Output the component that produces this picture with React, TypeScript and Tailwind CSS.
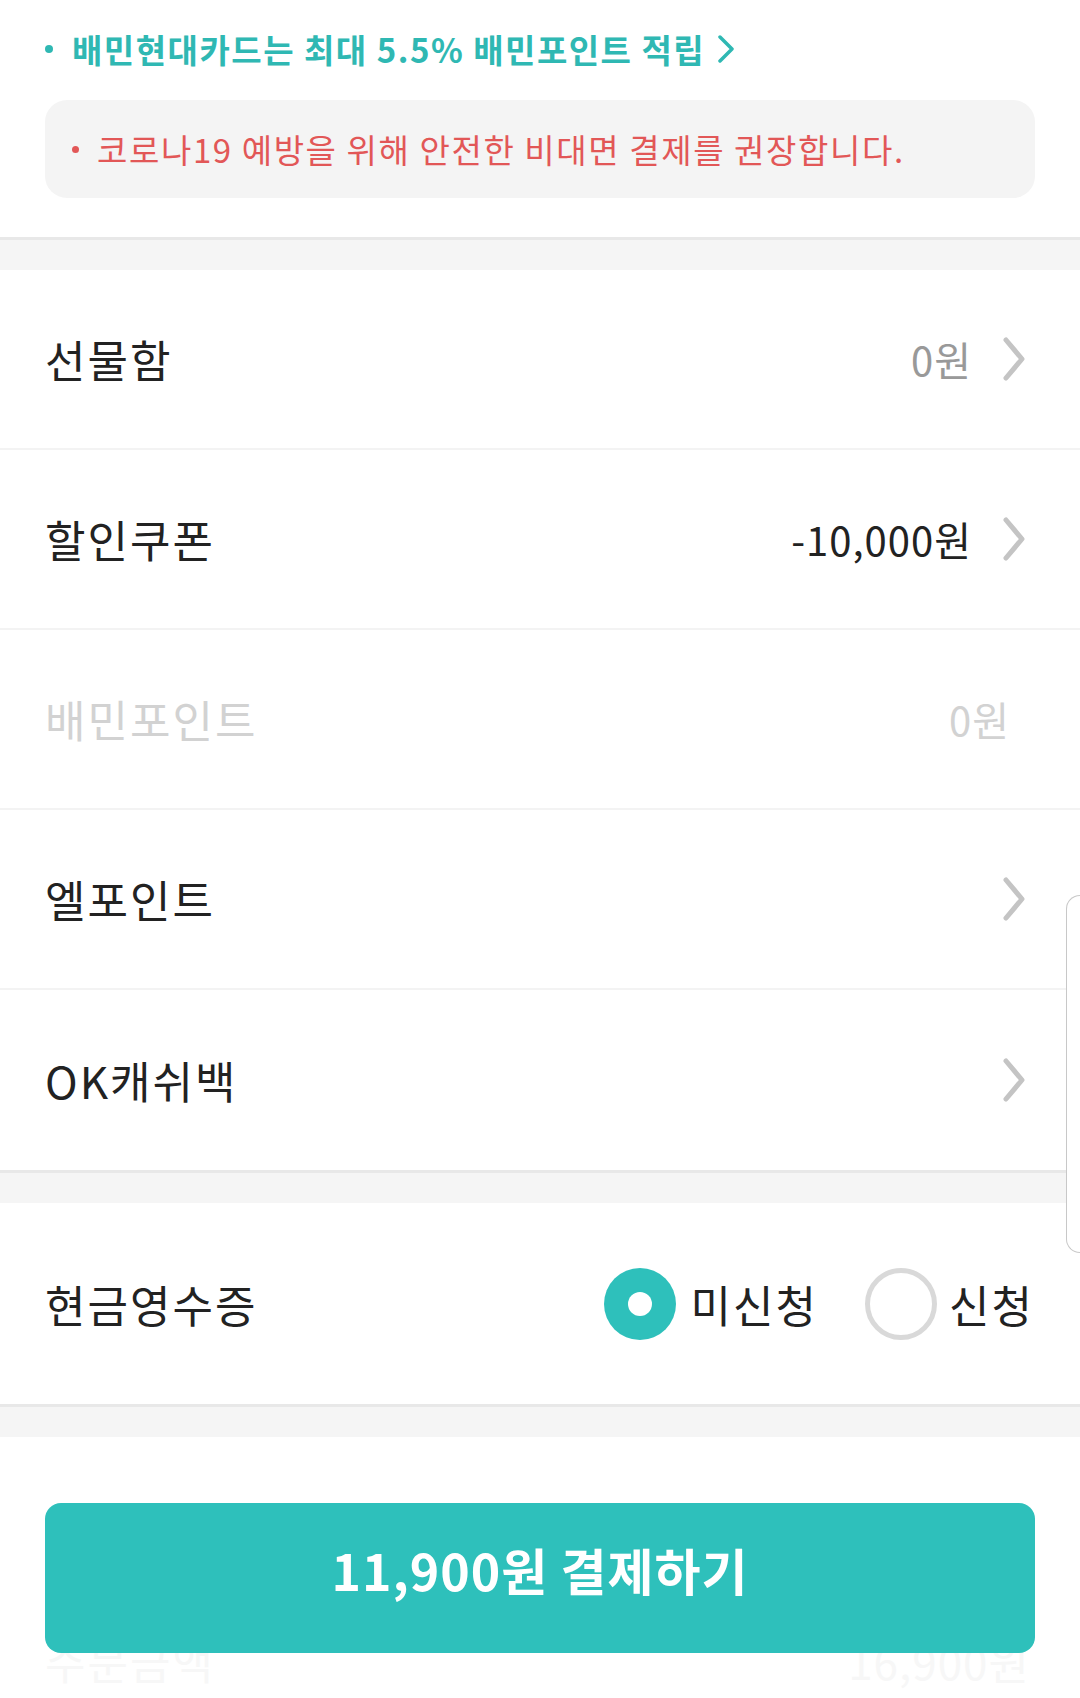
import React from "react";

const Chevron = ({ color = "#c4c4c4" }: { color?: string }) => (
  <svg width="24" height="44" viewBox="0 0 24 44" fill="none">
    <path d="M4 3 L20 22 L4 41" stroke={color} strokeWidth="5" strokeLinecap="round" strokeLinejoin="round" />
  </svg>
);

const Row = ({
  label,
  value,
  valueClass = "text-[#999999]",
  chevron = true,
  disabled = false,
  border = true,
}: {
  label: string;
  value?: string;
  valueClass?: string;
  chevron?: boolean;
  disabled?: boolean;
  border?: boolean;
}) => (
  <div
    className={`flex items-center justify-between pl-[45px] ${chevron ? "pr-[54px]" : "pr-[70px]"} ${
      border ? "h-[180px] border-b-2 border-[#f3f3f3]" : "h-[180px]"
    }`}
  >
    <span className={`text-[44px] leading-none tracking-[2px] ${disabled ? "text-[#d2d2d2]" : "text-[#222222]"}`}>
      {label}
    </span>
    <div className="flex items-center gap-[30px]">
      {value && <span className={`text-[40px] leading-none tracking-[1px] ${valueClass}`}>{value}</span>}
      {chevron && <Chevron />}
    </div>
  </div>
);

export default function App() {
  return (
    <div
      className="relative w-full min-h-[1698px] overflow-hidden bg-white"
      style={{ fontFamily: '"Noto Sans CJK KR", "Noto Sans", sans-serif' }}
    >
      {/* Top notice */}
      <div className="px-[45px] pt-[29px] pb-[39px]">
        <div className="flex h-[40px] items-center text-[#2fb8b3]">
          <span className="mr-[19px] h-[8px] w-[8px] rounded-full bg-[#2fb8b3]" />
          <span className="text-[33px] font-bold leading-none tracking-[1.5px]">배민현대카드는 최대 5.5% 배민포인트 적립</span>
          <svg className="ml-[12px]" width="18" height="28" viewBox="0 0 18 28" fill="none">
            <path d="M3 2 L15 14 L3 26" stroke="#2fb8b3" strokeWidth="3.5" strokeLinecap="round" strokeLinejoin="round" />
          </svg>
        </div>
        <div className="mt-[31px] flex h-[98px] items-center rounded-[22px] bg-[#f4f4f4] pl-[27px]">
          <span className="mr-[18px] h-[7px] w-[7px] rounded-full bg-[#e25757]" />
          <span className="text-[33px] leading-none tracking-[1.6px] text-[#e25757]">
            코로나19 예방을 위해 안전한 비대면 결제를 권장합니다.
          </span>
        </div>
      </div>

      {/* Separator */}
      <div className="h-[33px] border-t-[3px] border-[#e8e8e8] bg-[#f5f5f5]" />

      {/* Rows */}
      <Row label="선물함" value="0원" />
      <Row label="할인쿠폰" value="-10,000원" valueClass="text-[#222222]" />
      <Row label="배민포인트" value="0원" valueClass="text-[#d2d2d2]" chevron={false} disabled />
      <Row label="엘포인트" />
      <Row label="OK캐쉬백" border={false} />

      <div className="h-[33px] border-t-[3px] border-[#e8e8e8] bg-[#f5f5f5]" />

      {/* Cash receipt */}
      <div className="flex h-[201px] items-center justify-between pl-[45px] pr-[46px]">
        <span className="text-[44px] leading-none tracking-[2px] text-[#222222]">현금영수증</span>
        <div className="flex items-center">
          <div className="flex items-center gap-[15px]">
            <span className="flex h-[72px] w-[72px] items-center justify-center rounded-full bg-[#2ec0bb]">
              <span className="h-[24px] w-[24px] rounded-full bg-white" />
            </span>
            <span className="text-[44px] leading-none tracking-[2px] text-[#222222]">미신청</span>
          </div>
          <div className="ml-[47px] flex items-center gap-[12px]">
            <span className="h-[72px] w-[72px] rounded-full border-[5px] border-[#d9d9d9] bg-white" />
            <span className="text-[44px] leading-none tracking-[2px] text-[#222222]">신청</span>
          </div>
        </div>
      </div>

      <div className="h-[33px] border-t-[3px] border-[#e8e8e8] bg-[#f5f5f5]" />

      {/* Pay button */}
      <div className="px-[45px] pt-[66px]">
        <button className="relative z-10 flex h-[150px] w-full items-center justify-center rounded-[16px] bg-[#2ec0bb] pb-[18px]">
          <span className="text-[50px] font-bold leading-none tracking-[1px] text-white">11,900원 결제하기</span>
        </button>
        <div className="-mt-[14px] flex items-center justify-between pr-[5px]">
          <span className="text-[44px] leading-none tracking-[2px] text-[#f7f7f7]">주문금액</span>
          <span className="text-[44px] leading-none tracking-[1px] text-[#f7f7f7]">16,900원</span>
        </div>
      </div>

      {/* Edge panel handle */}
      <div className="absolute right-0 top-[895px] h-[358px] w-[14px] rounded-l-[14px] border border-r-0 border-[#c8c8c8] bg-white" />
    </div>
  );
}
